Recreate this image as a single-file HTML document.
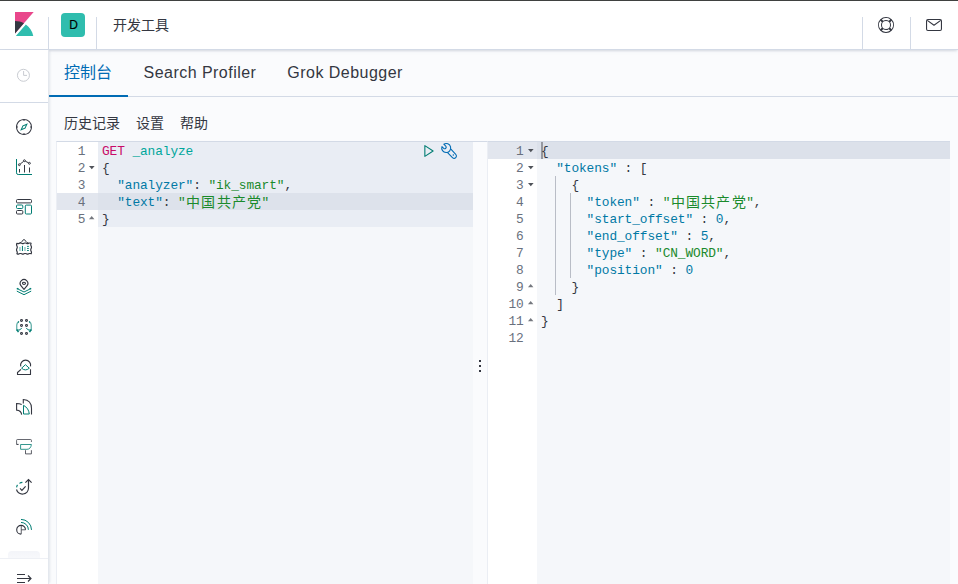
<!DOCTYPE html>
<html lang="zh-CN">
<head>
<meta charset="utf-8">
<title>Kibana - 开发工具</title>
<style>
*{box-sizing:border-box}
html,body{margin:0;padding:0}
body{width:958px;height:584px;overflow:hidden;position:relative;background:#FAFBFD;color:#343741;font-family:"Liberation Sans",sans-serif;font-size:14px}
.abs{position:absolute}
/* top window line */
.topline{position:absolute;left:0;top:0;width:958px;height:1px;background:#3f4140;z-index:30}
/* header */
.header{position:absolute;left:0;top:0;width:958px;height:50px;background:#fff;border-bottom:1px solid #D3DAE6;box-shadow:0 2px 2px -1px rgba(152,162,179,.3),0 1px 5px -2px rgba(152,162,179,.3);z-index:20}
.hsep{position:absolute;top:17px;width:1px;height:32px;background:#D3DAE6}
.avatar{position:absolute;left:61px;top:13px;width:24px;height:24px;border-radius:4px;background:#2FBDAE;color:#000;font-size:12px;line-height:24px;text-align:center;padding-left:1px;-webkit-text-stroke:.15px #000}
.crumb{position:absolute;left:113px;top:14px;height:22px;line-height:22px;font-size:14px;color:#343741;white-space:nowrap}
/* sidebar */
.side{position:absolute;left:0;top:50px;width:49px;height:534px;background:#fff;border-right:1px solid #E4E8EE;box-shadow:2px 0 2px -1px rgba(152,162,179,.22);z-index:25}
.side .div{position:absolute;left:0;top:52px;width:48px;height:1px;background:#D3DAE6}
.side svg{position:absolute;left:16px;width:16px;height:16px;overflow:visible}
.navactive{position:absolute;left:8px;top:501px;width:32px;height:32px;border-radius:4px;background:#EFF1F7}
.fade{position:absolute;left:0;top:494px;width:48px;height:14px;background:linear-gradient(rgba(255,255,255,0),rgba(255,255,255,.55))}
.collapse{position:absolute;left:0;top:508px;width:48px;height:26px;background:#fff;border-top:1px solid #EEF0F5}
/* tabs */
.tabs{position:absolute;left:49px;top:50px;width:909px;height:47px}
.tabs .line{position:absolute;left:0;bottom:0;width:100%;height:1px;background:#D3DAE6}
.tab{position:absolute;top:-1px;height:48px;line-height:47px;font-size:16px;color:#343741;white-space:nowrap;letter-spacing:.47px}
.tab.sel{color:#006BB4;letter-spacing:0}
.tabs .ul{position:absolute;left:0;bottom:0;width:79px;height:2px;background:#006BB4}
/* menu */
.menu{position:absolute;top:112px;height:22px;line-height:22px;font-size:14px;color:#343741;white-space:nowrap}
/* editors */
.ed{position:absolute;top:141px;height:443px;border-top:1px solid #D3DAE6;border-left:1px solid #EBEEF4;background:#F5F7FA;overflow:hidden}
.gut{position:absolute;left:0;top:0;height:100%;background:#fff}
.row{position:absolute;left:0;height:17px}
.code{font-family:"Liberation Mono",monospace;font-size:12.83px;letter-spacing:-.098px;white-space:pre;color:#343741}
.ln{position:absolute;height:17px;line-height:19px;text-align:right;font-family:"Liberation Mono",monospace;font-size:12.83px;color:#69707D;white-space:pre}
.cl{position:absolute;height:17px;line-height:19px}
.k{color:#0079A5}.s{color:#1A8A2C}.m{color:#C80A68}.u{color:#00A69B}.n{color:#0079A5}
.cj{display:inline-block;width:15.2px;letter-spacing:0;text-align:center;font-size:14px;line-height:21px;height:19px;vertical-align:top}
.guide{position:absolute;width:1px;background:#b9bdc6}
</style>
</head>
<body>
<div class="topline"></div>

<!-- HEADER -->
<div class="header">
  <svg class="abs" style="left:12px;top:12px" width="24" height="24" viewBox="0 0 32 32"><polygon fill="#E9478B" points="4 0 4 28.789 28.924 .017 28.935 0"/><path fill="#343741" d="M4 12v16.789l11.906-13.738C12.58 13.141 8.452 12 4 12"/><path fill="#2FBDAE" d="M18.479 16.664L6.268 30.754l-1.073 1.237h23.191c-1.252-6.292-4.883-11.719-9.908-15.327"/></svg>
  <div class="hsep" style="left:48px"></div>
  <div class="avatar">D</div>
  <div class="hsep" style="left:96px"></div>
  <div class="crumb">开发工具</div>
  <div class="hsep" style="left:862px"></div>
  <svg class="abs" style="left:878px;top:17px" width="16" height="16" viewBox="0 0 16 16"><path fill="#343741" d="M13.6 12.186l-1.357-1.358c-.025-.025-.058-.034-.084-.056.53-.794.84-1.746.84-2.773a4.977 4.977 0 0 0-.84-2.772c.026-.02.059-.03.084-.056L13.6 3.813a6.96 6.96 0 0 1 0 8.373zM8 15A6.956 6.956 0 0 1 3.814 13.6l1.358-1.358c.025-.025.034-.057.055-.084C6.02 12.688 6.974 13 8 13a4.978 4.978 0 0 0 2.773-.84c.02.026.03.058.056.083l1.357 1.358A6.956 6.956 0 0 1 8 15zm-5.601-2.813a6.963 6.963 0 0 1 0-8.373l1.359 1.358c.024.025.057.035.084.056A4.97 4.97 0 0 0 3 8c0 1.027.31 1.98.842 2.773-.027.022-.06.031-.084.056l-1.36 1.358zm5.6-.187A4 4 0 1 1 8 4a4 4 0 0 1 0 8zM8 1c1.573 0 3.019.525 4.187 1.4l-1.357 1.358c-.025.025-.035.057-.056.084A4.979 4.979 0 0 0 8 3a4.979 4.979 0 0 0-2.773.842c-.021-.027-.03-.059-.055-.084L3.814 2.4A6.957 6.957 0 0 1 8 1zm0-1a8.001 8.001 0 1 0 .003 16.002A8.001 8.001 0 0 0 8 0z"/></svg>
  <div class="hsep" style="left:910px"></div>
  <svg class="abs" style="left:926px;top:17px" width="16" height="16" viewBox="0 0 16 16" fill="none" stroke="#343741" stroke-width="1.100" stroke-linejoin="round"><rect x=".55" y="2.550" width="14.900" height="10.900" rx="1.400"/><path d="M1.300 3.400L8 8.300l6.700-4.900"/></svg>
</div>

<!-- SIDEBAR -->
<div class="side">
  <div class="div"></div>
  <svg style="top:17px" viewBox="0 0 16 16" fill="none" stroke-width="1" stroke-linecap="butt"><circle cx="7.45" cy="8.3" r="6" stroke="#C9CCD2"/><path d="M7.6 4v4.4h3.4" stroke="#C9CCD2"/></svg>
  <svg style="top:69px" viewBox="0 0 16 16" fill="none" stroke-width="1" stroke-linecap="butt"><g transform="scale(.5)" stroke="none"><path fill="#017D73" fill-rule="evenodd" d="M8.330 23.670l4.790-10.550 10.550-4.790-4.790 10.550-10.550 4.790zm6.300-9l-2.280 5 5-2.280 2.280-5-5 2.280z"/><path fill="#343741" fill-rule="evenodd" d="M16 0C7.163 0 0 7.163 0 16s7.163 16 16 16 16-7.163 16-16A16 16 0 0 0 16 0zm1 29.950V28h-2v1.950A14 14 0 0 1 2.050 17H4v-2H2.050A14 14 0 0 1 15 2.050V4h2V2.050A14 14 0 0 1 29.950 15H28v2h1.950A14 14 0 0 1 17 29.950z"/></g></svg>
  <svg style="top:109px" viewBox="0 0 16 16" fill="none" stroke-width="1" stroke-linecap="butt"><path d="M.5 0V13.800a1.700 1.700 0 0 0 1.700 1.700H16" stroke="#017D73"/><path d="M3.500 10v3.500M8.500 6v7.500M13.500 8.500v5" stroke="#343741"/><circle cx="3.350" cy="5.700" r=".95" stroke="#343741"/><circle cx="8.400" cy="1.700" r=".95" stroke="#343741"/><circle cx="13.400" cy="4.300" r=".95" stroke="#343741"/><path d="M4.200 5l3.400-2.600M9.300 2.200l3.200 1.600" stroke="#343741"/></svg>
  <svg style="top:149px" viewBox="0 0 16 16" fill="none" stroke-width="1" stroke-linecap="butt"><rect x=".5" y=".5" width="15" height="3.400" rx="1" stroke="#343741"/><rect x=".5" y="6" width="6.300" height="3.500" rx="1" stroke="#017D73"/><rect x=".5" y="11.500" width="6.300" height="3.500" rx="1" stroke="#343741"/><rect x="9.300" y="6.100" width="6.200" height="8.900" rx="1" stroke="#017D73"/></svg>
  <svg style="top:189px" viewBox="0 0 16 16" fill="none" stroke-width="1" stroke-linecap="butt"><path d="M0.90 4.30L1.69 4.65L2.48 4.65L3.27 4.30L4.06 3.95L4.84 3.95L5.63 4.30L6.42 4.65L7.21 4.65L8.00 4.30L8.79 3.95L9.58 3.95L10.37 4.30L11.16 4.65L11.94 4.65L12.73 4.30L13.52 3.95L14.31 3.95L15.10 4.30L14.75 5.17L14.75 6.05L15.10 6.92L15.45 7.80L15.45 8.68L15.10 9.55L14.75 10.43L14.75 11.30L15.10 12.18L15.45 13.05L15.45 13.93L15.10 14.80L14.31 14.45L13.52 14.45L12.73 14.80L11.94 15.15L11.16 15.15L10.37 14.80L9.58 14.45L8.79 14.45L8.00 14.80L7.21 15.15L6.42 15.15L5.63 14.80L4.84 14.45L4.06 14.45L3.27 14.80L2.48 15.15L1.69 15.15L0.90 14.80L1.25 13.93L1.25 13.05L0.90 12.18L0.55 11.30L0.55 10.43L0.90 9.55L1.25 8.68L1.25 7.80L0.90 6.93L0.55 6.05L0.55 5.18z" stroke="#343741" stroke-width="1.150" stroke-linejoin="round"/><path d="M3.200 4.300Q5.300 3.700 6.300 2.200L7.300.8Q8 0 8.700.8L9.700 2.200Q10.700 3.700 12.800 4.300" stroke="#343741" stroke-width="1"/><path d="M4.600 7.900h-1.300v4.100h1.300zM9.600 7.900h-1.300v4.100h1.300z" fill="#017D73" fill-opacity=".45" stroke="none"/><path d="M6.450 6.900v5.100" stroke="#017D73" stroke-width="1"/><path d="M11 7.400h1.900M11 9.450h1.900M11 11.500h1.900" stroke="#017D73" stroke-width=".9"/></svg>
  <svg style="top:229px" viewBox="0 0 16 16" fill="none" stroke-width="1" stroke-linecap="butt"><path d="M8 10.400L5.100 6.900a3.800 3.800 0 1 1 5.800 0z" stroke="#343741" stroke-width="1.150" stroke-linejoin="round"/><ellipse cx="8" cy="4.350" rx="1.500" ry="1.150" stroke="#343741" stroke-width="1.100"/><path d="M.8 9.400l1.900.950M15.200 9.400l-1.900.950" stroke="#017D73" stroke-width="1.600"/><path d="M2.500 10.300L8 13l5.500-2.700" stroke="#017D73"/><path d="M.8 12.100L8 15.700l7.200-3.600" stroke="#017D73"/></svg>
  <svg style="top:269px" viewBox="0 0 16 16" fill="none" stroke-width="1" stroke-linecap="butt"><circle cx="5.5" cy="1.45" r=".95" stroke="#343741" stroke-width="1.080"/><circle cx="5.5" cy="6.5" r=".95" stroke="#343741" stroke-width="1.080"/><circle cx="5.5" cy="14.4" r=".95" stroke="#343741" stroke-width="1.080"/><circle cx="10.5" cy="1.45" r=".95" stroke="#343741" stroke-width="1.080"/><circle cx="10.5" cy="6.5" r=".95" stroke="#343741" stroke-width="1.080"/><circle cx="10.5" cy="14.4" r=".95" stroke="#343741" stroke-width="1.080"/><path d="M2.800 2.900Q.75 4 .75 6v4.500" stroke="#017D73" stroke-opacity=".65" stroke-width="1.200"/><path d="M2.900 2.300l-.9 1.100" stroke="#017D73" stroke-width="1.100"/><path d="M1 11.300q3.800.3 4.600-2" stroke="#017D73" stroke-linecap="round"/><path d="M.6 10.300l1.900 2.800" stroke="#017D73" stroke-width="1.500"/><g transform="translate(16 0) scale(-1 1)"><path d="M2.800 2.900Q.75 4 .75 6v4.500" stroke="#017D73" stroke-opacity=".65" stroke-width="1.200"/><path d="M2.900 2.300l-.9 1.100" stroke="#017D73" stroke-width="1.100"/><path d="M1 11.300q3.800.3 4.600-2" stroke="#017D73" stroke-linecap="round"/><path d="M.6 10.300l1.900 2.800" stroke="#017D73" stroke-width="1.500"/></g></svg>
  <svg style="top:309px" viewBox="0 0 16 16" fill="none" stroke-width="1" stroke-linecap="butt"><path d="M4.700 7.400a5.050 5.050 0 1 1 9.800 0" stroke="#343741" stroke-width="1.150"/><path d="M5 10.300L1.500 13.500v2h13v-5.200" stroke="#343741" stroke-width="1.100" stroke-linejoin="round"/><path d="M9.450 5.700L5.600 9.200q3.850 3.400 7.700 0z" stroke="#017D73" stroke-linejoin="round"/></svg>
  <svg style="top:349px" viewBox="0 0 16 16" fill="none" stroke-width="1" stroke-linecap="butt"><path d="M7.300 4.600V.5Q15.500 1 15.500 9.500v6" stroke="#343741" stroke-width="1.100"/><path d="M5.700 5.500Q3.500 4.500.6 4.500v6.600q4.700.3 5 4.500" stroke="#343741" stroke-width="1.100"/><path d="M7.500 6.300v8.700h5.800q-.6-5.900-5.800-8.700z" stroke="#017D73" stroke-linejoin="round"/></svg>
  <svg style="top:389px" viewBox="0 0 16 16" fill="none" stroke-width="1" stroke-linecap="butt"><path d="M.6 5.500V1.300q0-.8.800-.8h13.200q.8 0 .8.800v1.700" stroke="#343741" stroke-opacity=".75"/><path d="M.6 5.400h2" stroke="#343741"/><path d="M4.600 5.500h10.800q-.7 4.800-4.400 4.800H4.600z" stroke="#017D73" stroke-linejoin="round" stroke-opacity=".8"/><path d="M9.500 11.200v3.700h5.900v-3.700" stroke="#343741" stroke-opacity=".8"/></svg>
  <svg style="top:429px" viewBox="0 0 16 16" fill="none" stroke-width="1" stroke-linecap="butt"><path d="M12.500.8V9A6.100 6.100 0 0 1 .5 10.500" stroke="#343741" stroke-width="1.200"/><path d="M9.400 3.700L12.500.6l3.100 3.100" stroke="#343741" stroke-width="1.200"/><path d="M4 9.400l1.900 1.900 3.700-4" stroke="#343741" stroke-width="1.200"/><path d="M3.400 4.400q1.400-.9 3-1" stroke="#017D73" stroke-width="1.100"/><path d="M.6 8.300q.2-1.300.9-2.400" stroke="#017D73" stroke-width="1.100"/></svg>
  <svg style="top:469px" viewBox="0 0 16 16" fill="none" stroke-width="1" stroke-linecap="butt"><path d="M9.500 10.750A4.400 4.400 0 1 0 5.100 15.150" stroke="#343741" stroke-width="1.100"/><path d="M5.250 6.400v8.800M5.250 10.800h4.300" stroke="#343741" stroke-opacity=".8"/><path d="M5 3.400A7.400 7.400 0 0 1 12.400 10.800" stroke="#017D73"/><path d="M5 .4A10.500 10.500 0 0 1 15.500 10.900" stroke="#017D73"/></svg>
  <div class="navactive"></div>
  <div class="fade"></div>
  <div class="collapse"></div>
  <svg style="top:523px" viewBox="0 0 16 16" fill="none" stroke="#343741" stroke-width="1.150"><path d="M1 1.500h8M1 5.500h14M1 9.500h8M12 2.500l3 3-3 3"/></svg>
</div>

<!-- TABS -->
<div class="tabs">
  <div class="line"></div>
  <div class="ul"></div>
  <div class="tab sel" style="left:15px">控制台</div>
  <div class="tab" style="left:94.500px">Search Profiler</div>
  <div class="tab" style="left:238.300px">Grok Debugger</div>
</div>

<!-- MENU -->
<div class="menu" style="left:64px">历史记录</div>
<div class="menu" style="left:136px">设置</div>
<div class="menu" style="left:180px">帮助</div>

<div class="abs" style="left:56px;top:141px;width:894px;height:1px;background:#D3DAE6"></div>

<!-- LEFT EDITOR -->
<div class="ed" id="edL" style="left:56px;width:417px">
  <div class="gut" style="width:41px"></div>
  <div class="row" style="left:41px;top:0;width:375px;height:85px;background:#E9EDF4"></div>
  <div class="row" style="left:41px;top:51px;width:375px;background:#DDE2EB"></div>
  <div class="row" style="left:0;top:51px;width:41px;background:#E2E6EE"></div>
  <div class="ln" style="left:0;top:0px;width:28.500px">1</div>
  <div class="cl code" style="left:45px;top:0px"><span class="m">GET</span> <span class="u">_analyze</span></div>
  <div class="ln" style="left:0;top:17px;width:28.500px">2</div>
  <div class="cl code" style="left:45px;top:17px">{</div>
  <div class="ln" style="left:0;top:34px;width:28.500px">3</div>
  <div class="cl code" style="left:45px;top:34px">  <span class="k">"analyzer"</span>: <span class="s">"ik_smart"</span>,</div>
  <div class="ln" style="left:0;top:51px;width:28.500px">4</div>
  <div class="cl code" style="left:45px;top:51px">  <span class="k">"text"</span>: <span class="s">"<span class="cj">中</span><span class="cj">国</span><span class="cj">共</span><span class="cj">产</span><span class="cj">党</span>"</span></div>
  <div class="ln" style="left:0;top:68px;width:28.500px">5</div>
  <div class="cl code" style="left:45px;top:68px">}</div>
  <svg class="abs" style="left:32.100px;top:24px" width="6" height="4" viewBox="0 0 6 4"><path d="M0 0h5.600L2.800 3.200z" fill="#4f5259"/></svg>
  <svg class="abs" style="left:32px;top:74.100px" width="6" height="4" viewBox="0 0 6 4"><path d="M0 3.200h5.400L2.700 0z" fill="#74777e"/></svg>
  <svg class="abs" style="left:365px;top:1px" width="14" height="16" viewBox="0 0 14 16" fill="none"><path d="M2.850 2.650v10.700l8.250-5.350z" stroke="#017D73" stroke-width="1.100" stroke-linejoin="round"/></svg>
  <svg class="abs" style="left:384px;top:1px" width="16" height="16" viewBox="0 0 16 16" fill="none" overflow="visible"><path d="M2.810 1.190A4.500 4.500 0 1 1 .94 3.560L2.680 5.300A1.500 1.500 0 0 0 4.800 3.180Z" stroke="#006BB4" stroke-width="1.100" stroke-linejoin="round"/><path d="M9.900 6.200L14.730 11.270A2.300 2.300 0 0 1 11.470 14.530L6.310 9.370" stroke="#006BB4" stroke-width="1.100" stroke-linejoin="round"/><circle cx="12.300" cy="12.100" r=".75" fill="#006BB4"/></svg>
</div>

<!-- RESIZER -->
<div class="abs" style="left:479px;top:360px;width:2px;height:2px;background:#343741"></div>
<div class="abs" style="left:479px;top:365px;width:2px;height:2px;background:#343741"></div>
<div class="abs" style="left:479px;top:370px;width:2px;height:2px;background:#343741"></div>

<!-- RIGHT EDITOR -->
<div class="ed" id="edR" style="left:487px;width:463px">
  <div class="gut" style="width:49px"></div>
  <div class="row" style="left:49px;top:0;width:414px;background:#DCE1EA"></div>
  <div class="row" style="left:0;top:0;width:49px;background:#E2E6EE"></div>
  <div class="abs" style="left:53px;top:0;width:2px;height:17px;background:#9598a0"></div>
  <div class="ln" style="left:0;top:0px;width:35.800px">1</div>
  <div class="cl code" style="left:53px;top:0px">{</div>
  <div class="ln" style="left:0;top:17px;width:35.800px">2</div>
  <div class="cl code" style="left:53px;top:17px">  <span class="k">"tokens"</span> : [</div>
  <div class="ln" style="left:0;top:34px;width:35.800px">3</div>
  <div class="cl code" style="left:53px;top:34px">    {</div>
  <div class="ln" style="left:0;top:51px;width:35.800px">4</div>
  <div class="cl code" style="left:53px;top:51px">      <span class="k">"token"</span> : <span class="s">"<span class="cj">中</span><span class="cj">国</span><span class="cj">共</span><span class="cj">产</span><span class="cj">党</span>"</span>,</div>
  <div class="ln" style="left:0;top:68px;width:35.800px">5</div>
  <div class="cl code" style="left:53px;top:68px">      <span class="k">"start_offset"</span> : <span class="n">0</span>,</div>
  <div class="ln" style="left:0;top:85px;width:35.800px">6</div>
  <div class="cl code" style="left:53px;top:85px">      <span class="k">"end_offset"</span> : <span class="n">5</span>,</div>
  <div class="ln" style="left:0;top:102px;width:35.800px">7</div>
  <div class="cl code" style="left:53px;top:102px">      <span class="k">"type"</span> : <span class="s">"CN_WORD"</span>,</div>
  <div class="ln" style="left:0;top:119px;width:35.800px">8</div>
  <div class="cl code" style="left:53px;top:119px">      <span class="k">"position"</span> : <span class="n">0</span></div>
  <div class="ln" style="left:0;top:136px;width:35.800px">9</div>
  <div class="cl code" style="left:53px;top:136px">    }</div>
  <div class="ln" style="left:0;top:153px;width:35.800px">10</div>
  <div class="cl code" style="left:53px;top:153px">  ]</div>
  <div class="ln" style="left:0;top:170px;width:35.800px">11</div>
  <div class="cl code" style="left:53px;top:170px">}</div>
  <div class="ln" style="left:0;top:187px;width:35.800px">12</div>
  <svg class="abs" style="left:39.800px;top:7px" width="6" height="4" viewBox="0 0 6 4"><path d="M0 0h5.600L2.800 3.200z" fill="#4f5259"/></svg>
  <svg class="abs" style="left:39.800px;top:24px" width="6" height="4" viewBox="0 0 6 4"><path d="M0 0h5.600L2.800 3.200z" fill="#4f5259"/></svg>
  <svg class="abs" style="left:39.800px;top:41px" width="6" height="4" viewBox="0 0 6 4"><path d="M0 0h5.600L2.800 3.200z" fill="#4f5259"/></svg>
  <svg class="abs" style="left:40.100px;top:142.2px" width="6" height="4" viewBox="0 0 6 4"><path d="M0 3.200h5.400L2.700 0z" fill="#74777e"/></svg>
  <svg class="abs" style="left:40.100px;top:159.2px" width="6" height="4" viewBox="0 0 6 4"><path d="M0 3.200h5.400L2.700 0z" fill="#74777e"/></svg>
  <svg class="abs" style="left:40.100px;top:176.2px" width="6" height="4" viewBox="0 0 6 4"><path d="M0 3.200h5.400L2.700 0z" fill="#74777e"/></svg>
  <div class="guide" style="left:67px;top:34px;height:119px"></div>
  <div class="guide" style="left:82px;top:51px;height:85px"></div>
</div>

</body>
</html>
